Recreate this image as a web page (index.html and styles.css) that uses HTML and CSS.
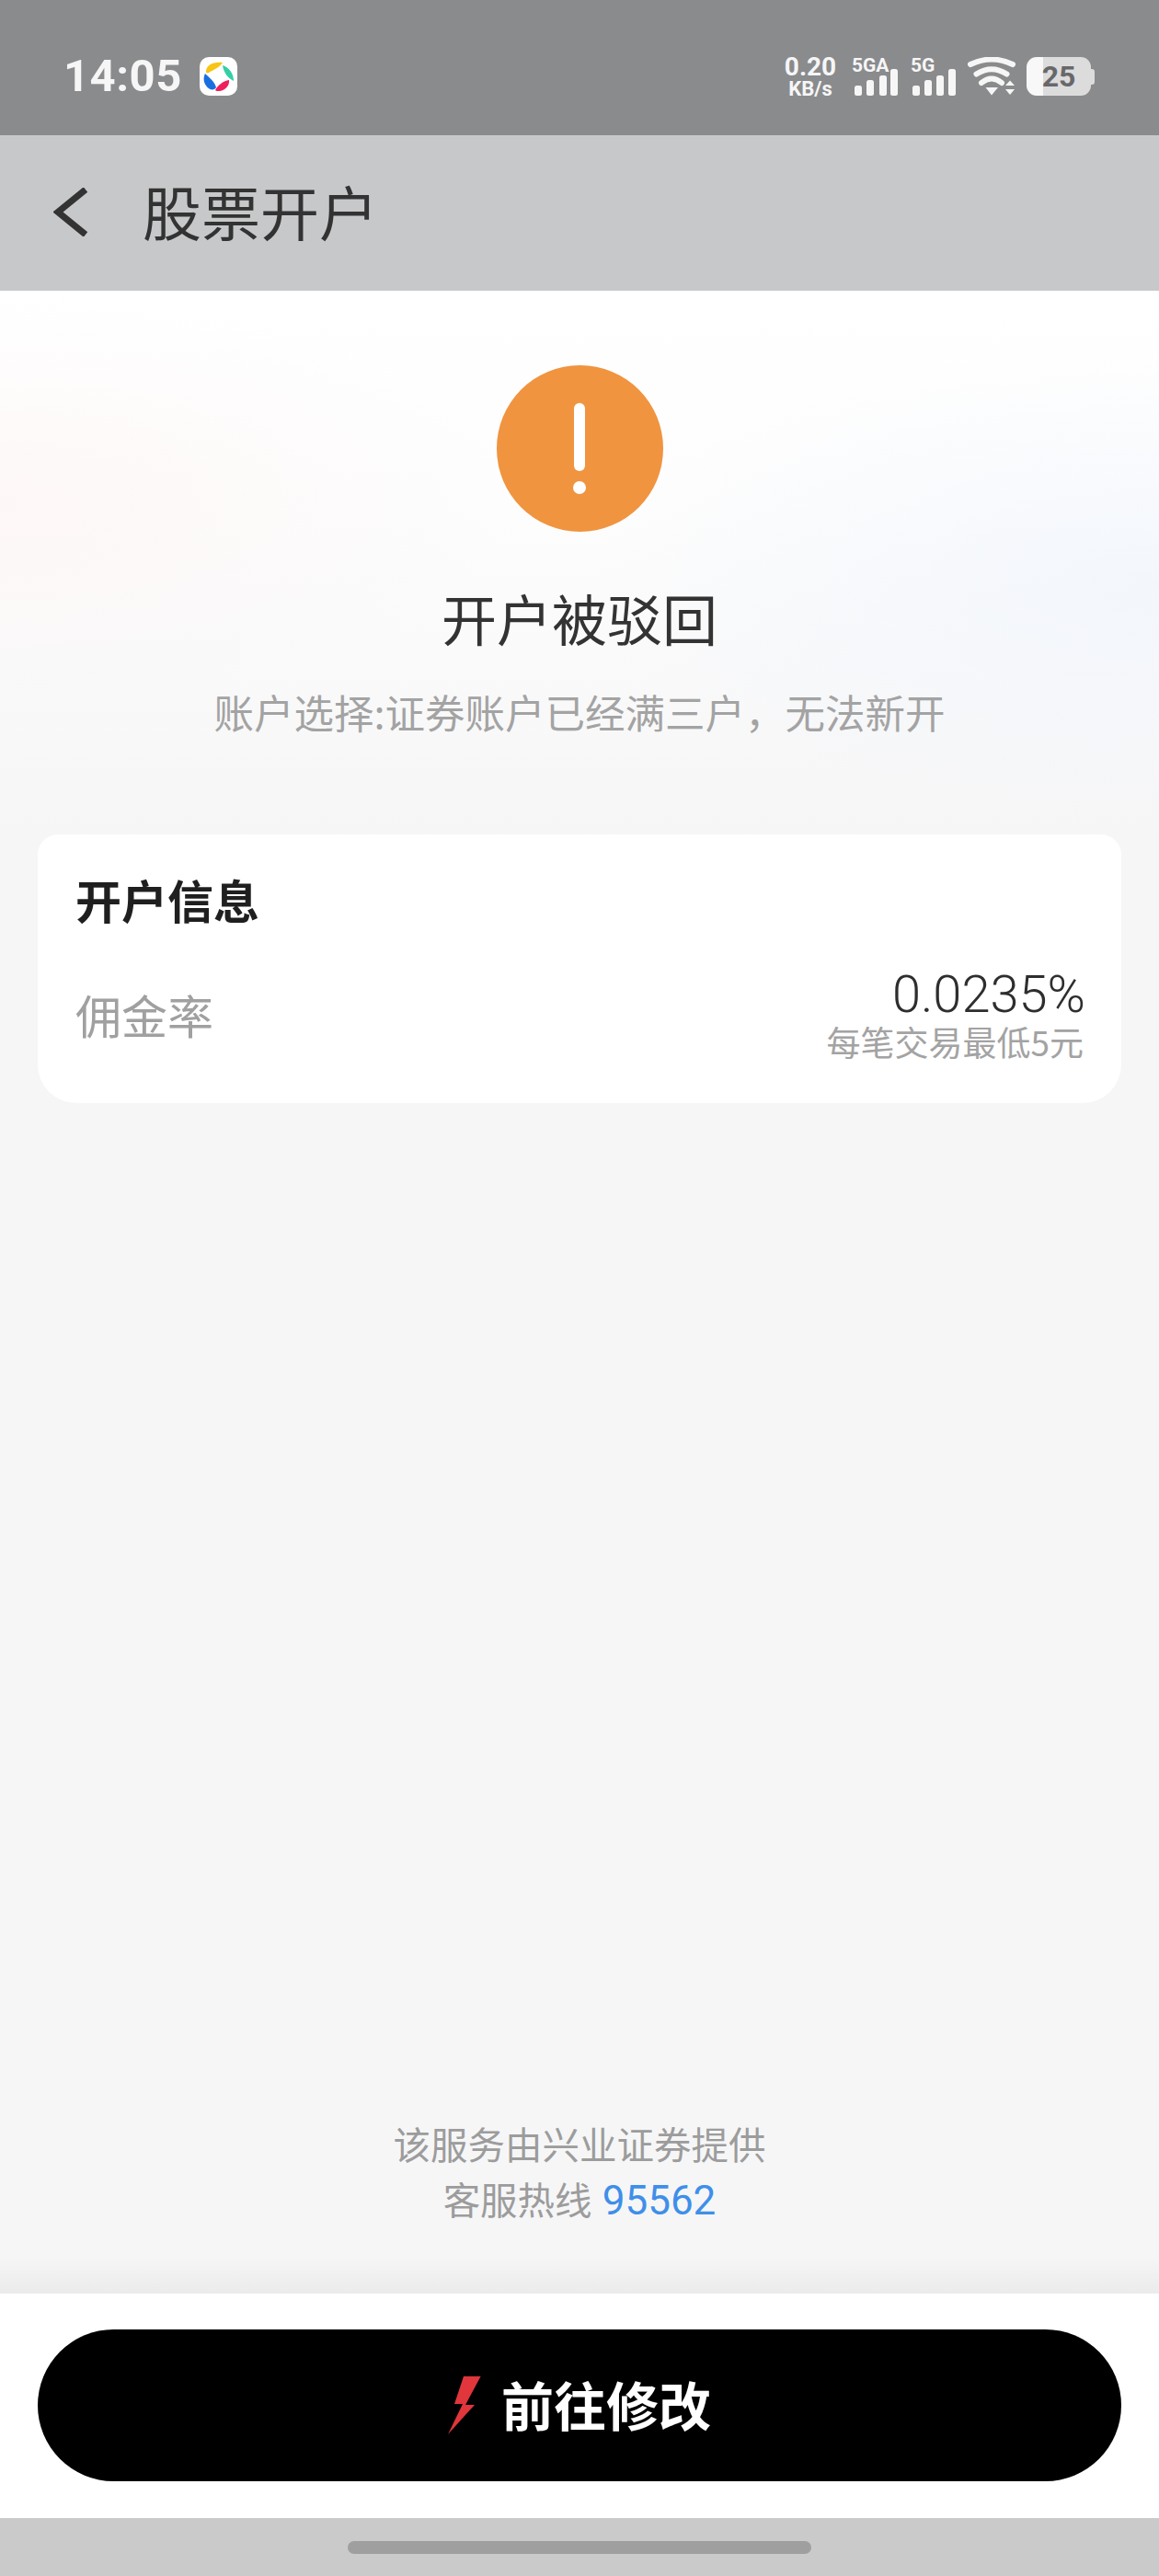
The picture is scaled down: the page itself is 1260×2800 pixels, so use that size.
FILE: index.html
```html
<!DOCTYPE html>
<html lang="zh-CN">
<head>
<meta charset="utf-8">
<title>股票开户</title>
<link rel="stylesheet" href="styles.css">
</head>
<body>
<div class="page">
  <header class="status">
    <div class="status-left">
      <span class="time">14:05</span>
      <svg class="app-icon" width="41" height="42" viewBox="0 0 41 42">
        <rect width="41" height="42" rx="10" fill="#fff"/>
        <path d="M7 16C7 9 14 5 25 6C22 11 15 14 10 17C8 18 7 17 7 16Z" fill="#f7c514"/>
        <path d="M25 9C32 11 37 18 37 26C31 23 26 17 25 9Z" fill="#35cfa5"/>
        <path d="M6 18C10 22 16 26 18 33C16 37 10 36 7 31C4 27 4 22 6 18Z" fill="#1a6fe0"/>
        <path d="M17 36C20 30 26 26 32 25C33 31 27 37 21 37C19 37 18 37 17 36Z" fill="#ef1f5c"/>
      </svg>
    </div>
    <div class="status-right">
      <div class="speed"><span class="speed-num">0.20</span><span class="speed-unit">KB/s</span></div>
      <div class="sig sig-a">
        <span class="sig-label">5GA</span>
        <svg width="50" height="42" viewBox="0 0 50 42">
          <rect x="3" y="31" width="8" height="11" rx="2.5"/><rect x="16" y="25" width="8" height="17" rx="2.5"/><rect x="30" y="20" width="8" height="22" rx="2.5"/><rect x="42" y="13" width="8" height="29" rx="2.5"/>
        </svg>
      </div>
      <div class="sig sig-b">
        <span class="sig-label">5G</span>
        <svg width="49" height="42" viewBox="0 0 49 42">
          <rect x="2" y="31" width="8" height="11" rx="2.5"/><rect x="15" y="25" width="8" height="17" rx="2.5"/><rect x="28" y="20" width="8" height="22" rx="2.5"/><rect x="41" y="13" width="8" height="29" rx="2.5"/>
        </svg>
      </div>
      <svg class="wifi" width="52" height="42" viewBox="0 0 52 42">
        <path class="wifi-arc" d="M3 8Q26 -3 49 8"/>
        <path class="wifi-arc" d="M9.500 18.500Q26 8 42.500 18.500"/>
        <path class="wifi-arc" d="M15 28Q26 19 37 28"/>
        <path class="wifi-fill" d="M19.500 33H33L26 41.500Z"/>
        <path class="wifi-fill" d="M41 31H51L46 25.500Z"/>
        <path class="wifi-fill" d="M41 35H51L46 41Z"/>
      </svg>
      <div class="battery">25</div>
    </div>
  </header>

  <nav class="nav">
    <svg class="back" width="37" height="53" viewBox="0 0 37 53">
      <path d="M35 2L5 26.500L35 51"/>
    </svg>
    <h1 class="nav-title">股票开户</h1>
  </nav>

  <main class="main">
    <section class="hero">
      <div class="alert">
        <span class="alert-bar"></span>
        <span class="alert-dot"></span>
      </div>
      <h2 class="hero-title">开户被驳回</h2>
      <p class="hero-sub">账户选择:证券账户已经满三户&#xFF0C;无法新开</p>
    </section>

    <section class="card">
      <h3 class="card-title">开户信息</h3>
      <div class="row">
        <span class="row-label">佣金率</span>
        <div class="row-value">
          <span class="rate">0.0235%</span>
          <span class="rate-note">每笔交易最低5元</span>
        </div>
      </div>
    </section>

    <footer class="provider">
      <p>该服务由兴业证券提供</p>
      <p>客服热线 <span class="phone">95562</span></p>
    </footer>
  </main>

  <div class="cta">
    <button class="cta-btn" type="button">
      <svg width="36" height="63" viewBox="0 0 36 63"><path d="M17 0H35.600L19 31H29L0 63L16 30H7Z" fill="#e0363c"/></svg>
      <span class="cta-label">前往修改</span>
    </button>
  </div>

  <div class="home"><span class="home-pill"></span></div>
</div>
</body>
</html>
```
FILE: styles.css
```css
* { box-sizing: border-box; }
html, body { margin: 0; padding: 0; }
body {
  width: 1260px;
  height: 2800px;
  overflow: hidden;
  font-family: "Noto Sans CJK SC", "Noto Sans", Roboto, sans-serif;
  background: #f6f6f7;
}
h1, h2, h3, p { margin: 0; font-weight: 400; }

.page { width: 1260px; height: 2800px; display: flex; flex-direction: column; }

/* status bar */
.status {
  height: 147px;
  flex: none;
  background: #8a8b8d;
  display: flex;
  align-items: flex-start;
  justify-content: space-between;
  padding: 62px 74px 0 69px;
  color: #f6f6f6;
}
.status-left { display: flex; align-items: center; gap: 19px; height: 42px; }
.time { font-family: Roboto, sans-serif; font-weight: 700; font-size: 49px; line-height: 42px; letter-spacing: 0.5px; }
.app-icon { display: block; }
.status-right { display: flex; align-items: flex-start; height: 42px; }
.speed {
  width: 54px;
  display: flex;
  flex-direction: column;
  align-items: center;
  font-family: Roboto, sans-serif;
  font-weight: 700;
  margin-right: 18px;
}
.speed-num { font-size: 28px; line-height: 22px; }
.speed-unit { font-size: 22px; line-height: 20px; margin-top: 3px; }
.sig { position: relative; height: 42px; fill: #f6f6f6; }
.sig svg { display: block; }
.sig-a { width: 50px; margin-right: 14px; }
.sig-b { width: 49px; margin-right: 13px; }
.sig-label {
  position: absolute;
  left: 0;
  top: -3px;
  font-family: Roboto, sans-serif;
  font-weight: 700;
  font-size: 21px;
  line-height: 24px;
}
.wifi { display: block; margin-right: 12px; }
.wifi-arc { fill: none; stroke: #f6f6f6; stroke-width: 6; stroke-linecap: round; }
.wifi-fill { fill: #f6f6f6; }
.battery {
  position: relative;
  width: 70px;
  height: 42px;
  border-radius: 11px;
  background: linear-gradient(to right, #f8f8f8 0, #f8f8f8 18px, #dcdcdc 18px);
  color: #68686a;
  font-family: Roboto, sans-serif;
  font-weight: 700;
  font-size: 32px;
  line-height: 42px;
  text-align: center;
}
.battery::after {
  content: "";
  position: absolute;
  right: -4px;
  top: 13px;
  width: 4px;
  height: 17px;
  border-radius: 0 3px 3px 0;
  background: #dcdcdc;
}

/* navigation */
.nav {
  height: 169px;
  flex: none;
  background: #c7c8ca;
  display: flex;
  align-items: center;
  padding-left: 58px;
}
.back { display: block; margin-top: -2px; }
.back path { fill: none; stroke: #333; stroke-width: 7; }
.nav-title { margin-left: 60px; font-size: 64px; line-height: 80px; color: #333; margin-top: -8px; }

/* body */
.main {
  flex: 1;
  min-height: 0;
  display: flex;
  flex-direction: column;
  background:
    linear-gradient(to top, #ebebeb, rgba(235, 235, 235, 0)) bottom / 100% 40px no-repeat,
    #f6f6f7;
}
.hero {
  height: 591px;
  flex: none;
  padding-top: 81px;
  display: flex;
  flex-direction: column;
  align-items: center;
  background:
    radial-gradient(ellipse 560px 220px at 0 230px, rgba(255, 236, 236, 0.35), rgba(255, 236, 236, 0)),
    radial-gradient(ellipse 620px 260px at 1260px 320px, rgba(232, 240, 252, 0.45), rgba(232, 240, 252, 0)),
    linear-gradient(to bottom, #fff 0, #fdfdfd 240px, #f6f6f7 591px);
}
.alert {
  width: 181px;
  height: 181px;
  flex: none;
  border-radius: 50%;
  background: #f09440;
  display: flex;
  flex-direction: column;
  align-items: center;
  padding-top: 41px;
}
.alert-bar { width: 12px; height: 74px; border-radius: 6px; background: #fff; }
.alert-dot { width: 14px; height: 14px; border-radius: 50%; background: #fff; margin-top: 11px; }
.hero-title { margin-top: 53px; font-size: 60px; line-height: 80px; color: #333; }
.hero-sub { margin-top: 33px; font-size: 43.5px; line-height: 60px; color: #a3a3a3; white-space: nowrap; }

.card {
  flex: none;
  margin: 0 41px;
  height: 292px;
  padding: 35px 41px 0;
  background: #fff;
  border-radius: 22px 22px 42px 42px;
}
.card-title { font-size: 50px; line-height: 70px; font-weight: 700; color: #1f1f1f; }
.row {
  margin-top: 44px;
  display: flex;
  align-items: center;
  justify-content: space-between;
}
.row-label { font-size: 50px; line-height: 70px; color: #a0a0a0; margin-top: -6px; }
.row-value { display: flex; flex-direction: column; align-items: flex-end; }
.rate { font-family: Roboto, sans-serif; font-weight: 300; font-size: 56px; line-height: 50px; color: #2e2e2e; margin-right: -2px; }
.rate-note { margin-top: 4px; font-size: 37px; line-height: 44px; color: #a3a3a3; }

.provider {
  margin-top: auto;
  padding-bottom: 71px;
  text-align: center;
  font-size: 40.500px;
  line-height: 60px;
  color: #9c9c9c;
}
.phone { font-family: Roboto, sans-serif; color: #3f8fe9; font-size: 44px; margin-left: 2px; }

/* bottom */
.cta {
  height: 244px;
  flex: none;
  background: #fff;
  padding: 39px 41px 0;
}
.cta-btn {
  width: 100%;
  height: 165px;
  border: 0;
  border-radius: 83px;
  background: #000;
  color: #fff;
  display: flex;
  align-items: center;
  justify-content: center;
  gap: 22px;
  font-family: inherit;
  font-size: 57px;
  font-weight: 700;
  line-height: 70px;
  padding: 0;
}
.cta-btn svg { display: block; }
.cta-label { margin-top: -6px; }

.home {
  height: 63px;
  flex: none;
  background: #cacaca;
  display: flex;
  justify-content: center;
  padding-top: 25px;
}
.home-pill { width: 504px; height: 14px; border-radius: 7px; background: #9f9f9f; }
```
